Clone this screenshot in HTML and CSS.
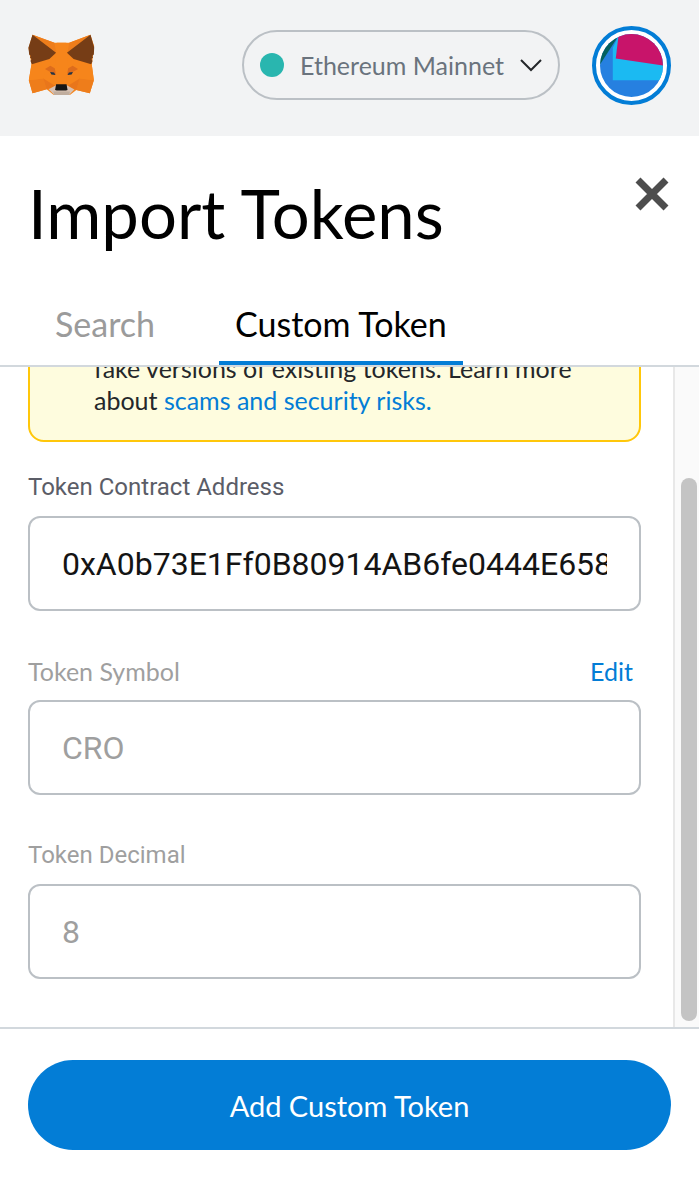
FILE: index.html
```html
<!DOCTYPE html>
<html lang="en">
<head>
<meta charset="utf-8">
<meta name="viewport" content="width=device-width, initial-scale=1">
<title>Import Tokens</title>
<link rel="stylesheet" href="styles.css">
</head>
<body>
<div class="app">
  <header class="topbar">
    <svg class="logo" viewBox="28 28 196 184" aria-hidden="true">
      <path fill="#f6851b" d="M40 30 105 54H149L212 30 223 64 216 120 222 165 210 204 170 194 152 208H102L82 192 40 204 29 165 37 118 28 70Z"/>
      <path fill="#ee7d1b" d="M40 30 105 54 110 82ZM212 30 149 54 144 82ZM29 165 72 160 82 192 40 204ZM222 165 180 160 170 194 210 204Z"/>
      <path fill="#f6851b" d="M37 118 104 96 78 136 72 160 29 165ZM216 120 148 96 176 136 180 160 222 165Z"/>
      <path fill="#763d16" d="M40 30 110 84 90 102 38 118 34 108 37 102 32 97 35 93 30 89 28 68ZM212 30 142 84 162 102 214 118 218 108 215 102 220 97 217 93 222 89 223 68Z"/>
      <path fill="#dd6c1c" d="M77 132 93 122 112 133 108 150ZM175 132 159 122 140 133 144 150Z"/>
      <path fill="#e9761b" d="M72 160 108 182 82 192ZM180 160 144 182 170 194Z"/>
      <path fill="#f6851b" d="M112 54H140L146 128 138 176H114L106 128Z"/>
      <path fill="#d7c1b3" d="M88 192 110 180H142L164 193 149 208H104Z"/>
      <path fill="#c0ad9e" d="M102 199H151L149 209H104Z"/>
      <path fill="#161616" d="M110 177H141L144 194 139 196H112L107 194Z"/>
      <path fill="#233447" d="M92 141 104 142 108 150 96 148ZM160 141 148 142 144 150 156 148Z"/>
    </svg>
    <button class="network" type="button">
      <span class="network-dot"></span>
      <span>Ethereum Mainnet</span>
      <svg class="chevron" viewBox="0 0 22 14" aria-hidden="true"><path d="M1 2 11 12 21 2" fill="none" stroke="#24272a" stroke-width="2"/></svg>
    </button>
    <button class="account" type="button" aria-label="Account">
      <svg viewBox="0 0 64 64" aria-hidden="true">
        <defs><clipPath id="disc"><circle cx="32" cy="32" r="32"/></clipPath></defs>
        <g clip-path="url(#disc)">
          <path fill="#2680e0" d="M0 0H64V64H0Z"/>
          <path fill="#03605e" d="M0 0H20L0 31Z"/>
          <path fill="#1bbaf2" d="M13 14 18 4 64 24V47H13Z"/>
          <path fill="#c8146a" d="M19 0H64V32L16 25Z"/>
        </g>
      </svg>
    </button>
  </header>
  <main class="page">
    <div class="heading">
      <h1>Import Tokens</h1>
      <button class="close" type="button" aria-label="Close">
        <svg viewBox="0 0 34 34" aria-hidden="true"><path d="M3 3 31 31M31 3 3 31" stroke="#4d4d4d" stroke-width="7"/></svg>
      </button>
    </div>
    <nav class="tabs">
      <button class="tab" type="button">Search</button>
      <button class="tab tab-active" type="button">Custom Token</button>
    </nav>
    <div class="scroll">
      <form class="form" id="token-form">
        <p class="notice">fake versions of existing tokens. Learn more about <a href="#">scams and security risks.</a></p>
        <div class="field">
          <div class="label-row"><label for="address">Token Contract Address</label></div>
          <input id="address" type="text" value="0xA0b73E1Ff0B80914AB6fe0444E65848C4C34450b">
        </div>
        <div class="field field-muted">
          <div class="label-row"><label class="label-alt" for="symbol">Token Symbol</label><button class="edit" type="button">Edit</button></div>
          <input id="symbol" type="text" value="CRO" disabled>
        </div>
        <div class="field field-muted">
          <div class="label-row"><label for="decimal">Token Decimal</label></div>
          <input id="decimal" type="text" value="8" disabled>
        </div>
      </form>
      <div class="scrollbar"><div class="thumb"></div></div>
    </div>
  </main>
  <footer class="footer"><button class="submit" type="submit" form="token-form">Add Custom Token</button></footer>
</div>
</body>
</html>
```
FILE: styles.css
```css
* { box-sizing: border-box; }
body { margin: 0; background: #fff; color: #24272a; font-family: Lato, "Liberation Sans", sans-serif; font-size: 25px; }
button { margin: 0; padding: 0; border: 0; background: none; color: inherit; font: inherit; cursor: pointer; }
svg { display: block; }
.app { display: flex; flex-direction: column; height: 100vh; }
.topbar { display: flex; flex: none; align-items: center; height: 136px; padding: 0 28px 6px; background: #f2f3f4; }
.logo { width: 67px; height: 62px; margin-right: auto; }
.network { display: flex; align-items: center; height: 70px; padding: 0 16px; border: 2px solid #bbc0c5; border-radius: 35px; color: #6a737d; }
.network-dot { width: 24px; height: 24px; margin-right: 16px; border-radius: 50%; background: #29b6af; }
.chevron { width: 22px; height: 14px; margin-left: 16px; }
.account { width: 79px; height: 79px; margin-left: 32px; padding: 4px; border: 4px solid #037dd6; border-radius: 50%; background: #fff; }
.page { display: flex; flex: 1; flex-direction: column; min-height: 0; }
.heading { display: flex; justify-content: space-between; align-items: flex-start; padding: 37px 30px 0 28px; }
h1 { margin: 0; color: #000; font-size: 67px; font-weight: 400; line-height: 80px; }
.close { padding: 4px 0; }
.close svg { width: 34px; height: 34px; }
.tabs { display: flex; gap: 48px; margin-top: 33px; padding: 0 39px; border-bottom: 2px solid #d2d8dd; }
.tab { height: 79px; padding: 0 16px; border-bottom: 4px solid transparent; color: #9b9b9b; font-size: 34px; }
.tab-active { border-color: #037dd6; color: #000; }
.scroll { display: flex; flex: 1; min-height: 0; overflow: hidden; }
.form { display: flex; flex: 1; flex-direction: column; justify-content: flex-end; gap: 45px; min-width: 0; padding: 0 32px 48px 28px; }
.notice { margin: 0 0 -15px; padding: 24px 30px 24px 64px; border: 2px solid #ffc70a; border-radius: 16px; background: #fefcde; line-height: 32px; }
.notice a { color: #037dd6; text-decoration: none; }
.field { display: flex; flex-direction: column; gap: 14px; }
.label-row { display: flex; justify-content: space-between; padding-right: 8px; color: #5b5d67; font-family: Roboto, sans-serif; font-size: 24px; line-height: 30px; }
.label-alt, .edit { font-family: Lato, sans-serif; font-size: 25px; }
.edit { color: #037dd6; }
.field input { width: 100%; height: 95px; padding: 0 32px; border: 2px solid #bbc0c5; border-radius: 12px; background: #fff; color: #141414; font-family: Roboto, sans-serif; font-size: 32px; }
.field-muted label, .field-muted input { color: #9f9f9f; }
.scrollbar { display: flex; flex-direction: column; justify-content: flex-end; width: 26px; padding: 0 2px 6px 6px; border-left: 2px solid #e8e8e8; background: #fafafa; }
.thumb { height: 83%; border-radius: 8px; background: #c4c4c4; }
.footer { flex: none; padding: 31px 28px 30px; border-top: 2px solid #d2d8dd; }
.submit { width: 100%; height: 90px; border-radius: 45px; background: #037dd6; color: #fff; font-size: 29px; }
```
